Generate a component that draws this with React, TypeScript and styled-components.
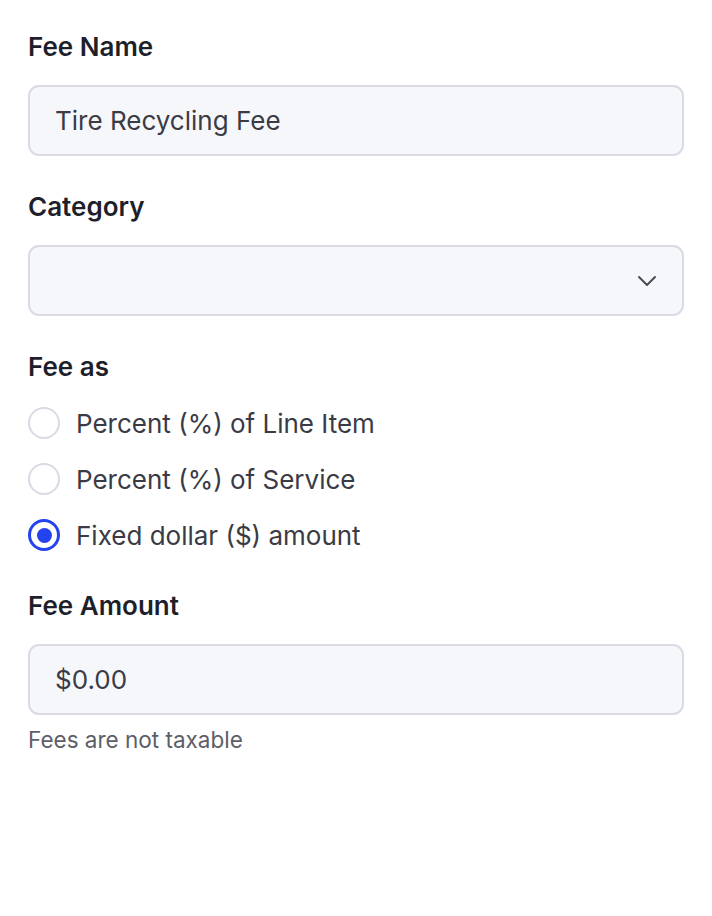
import styled, { createGlobalStyle } from "styled-components";

const GlobalStyle = createGlobalStyle`
  html, body {
    margin: 0;
    padding: 0;
    background: #ffffff;
  }
  body {
    font-family: Inter, Roboto, "Liberation Sans", Arial, sans-serif;
    -webkit-font-smoothing: antialiased;
  }
`;

const options = [
  "Percent (%) of Line Item",
  "Percent (%) of Service",
  "Fixed dollar ($) amount",
];

export default function App() {
  const selected = 2;
  return (
    <>
      <GlobalStyle />
      <Form>
        <Field>
          <Label>Fee Name</Label>
          <TextBox>Tire Recycling Fee</TextBox>
        </Field>
        <Field>
          <Label>Category</Label>
          <TextBox>
            <span />
            <Chevron width="20" height="12" viewBox="0 0 20 12">
              <path
                d="M2 2 L10 10 L18 2"
                fill="none"
                stroke="#4a4b55"
                strokeWidth="2"
                strokeLinecap="round"
                strokeLinejoin="round"
              />
            </Chevron>
          </TextBox>
        </Field>
        <Field>
          <Label>Fee as</Label>
          <RadioList>
            {options.map((text, i) => (
              <RadioRow key={text}>
                <RadioCircle $checked={i === selected} />
                <RadioText>{text}</RadioText>
              </RadioRow>
            ))}
          </RadioList>
        </Field>
        <Field>
          <Label>Fee Amount</Label>
          <TextBox>$0.00</TextBox>
          <Hint>Fees are not taxable</Hint>
        </Field>
      </Form>
    </>
  );
}

const Form = styled.div`
  display: flex;
  flex-direction: column;
  gap: 35px;
  padding: 31px 28px 40px;
`;

const Field = styled.div`
  display: flex;
  flex-direction: column;
`;

const Label = styled.div`
  font-size: 26px;
  line-height: 32px;
  font-weight: 600;
  color: #1e1f2a;
  margin-bottom: 22px;
`;

const TextBox = styled.div`
  box-sizing: border-box;
  height: 71px;
  display: flex;
  align-items: center;
  justify-content: space-between;
  padding: 0 26px 0 25px;
  background: #f6f7fb;
  border: 2px solid #d9dae3;
  border-radius: 11px;
  font-size: 26px;
  color: #3a3b45;
`;

const Chevron = styled.svg`
  display: block;
  margin-right: -1px;
`;

const RadioList = styled.div`
  display: flex;
  flex-direction: column;
  gap: 16px;
  margin-top: -2px;
`;

const RadioRow = styled.div`
  display: flex;
  align-items: center;
  gap: 16px;
  height: 40px;
`;

const RadioCircle = styled.span<{ $checked: boolean }>`
  box-sizing: border-box;
  width: 32px;
  height: 32px;
  border-radius: 50%;
  flex-shrink: 0;
  background: #ffffff;
  border: ${(p) => (p.$checked ? "3.5px solid #2443ee" : "2px solid #d9dae3")};
  display: flex;
  align-items: center;
  justify-content: center;

  &::after {
    content: "";
    display: ${(p) => (p.$checked ? "block" : "none")};
    width: 15px;
    height: 15px;
    border-radius: 50%;
    background: #2443ee;
  }
`;

const RadioText = styled.span`
  font-size: 26px;
  color: #3a3b45;
`;

const Hint = styled.div`
  margin-top: 11px;
  font-size: 22.5px;
  line-height: 28px;
  color: #5d5e68;
`;
